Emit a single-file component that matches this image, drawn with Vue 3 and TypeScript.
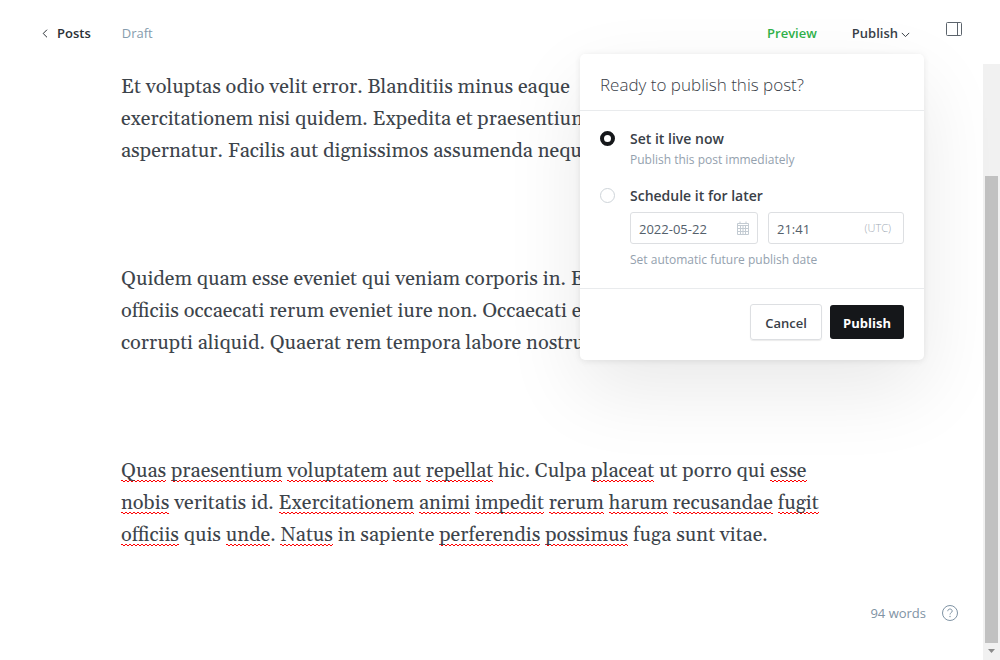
<script setup lang="ts">
import { ref } from 'vue'

interface Piece {
  text: string
  flagged?: boolean
}

const timing = ref<'now' | 'later'>('now')
const publishDate = ref('2022-05-22')
const publishTime = ref('21:41')

// Words wrapped in underscores carry the spell checker's mark.
const source: string[][] = [
  [
    'Et voluptas odio velit error. Blanditiis minus eaque',
    'exercitationem nisi quidem. Expedita et praesentium',
    'aspernatur. Facilis aut dignissimos assumenda neque',
  ],
  [
    'Quidem quam esse eveniet qui veniam corporis in. Et',
    'officiis occaecati rerum eveniet iure non. Occaecati et',
    'corrupti aliquid. Quaerat rem tempora labore nostrum',
  ],
  [
    '_Quas_ _praesentium_ _voluptatem_ _aut_ _repellat_ hic. Culpa _placeat_ ut porro qui _esse_',
    '_nobis_ veritatis id. _Exercitationem_ _animi_ _impedit_ _rerum_ _harum_ _recusandae_ _fugit_',
    '_officiis_ quis _unde_. _Natus_ in sapiente _perferendis_ _possimus_ fuga sunt vitae.',
  ],
]

function split(line: string): Piece[] {
  return line
    .split('_')
    .map((text, i) => ({ text, flagged: i % 2 === 1 }))
    .filter((piece) => piece.text !== '')
}

const paragraphs: Piece[][][] = source.map((lines) => lines.map(split))
</script>

<template>
  <div class="editor">
    <header class="topbar">
      <nav class="crumbs">
        <a class="back" href="#posts">
          <svg width="6" height="9" viewBox="0 0 6 9" aria-hidden="true">
            <path d="M5 .7 1.2 4.5 5 8.3" />
          </svg>
          Posts
        </a>
        <span class="status">Draft</span>
      </nav>
      <div class="actions">
        <button class="preview" type="button">Preview</button>
        <div class="menu">
          <button class="trigger" type="button" aria-expanded="true">
            Publish
            <svg width="9" height="6" viewBox="0 0 9 6" aria-hidden="true">
              <path d="M.8 .9 4.5 4.6 8.2 .9" />
            </svg>
          </button>

          <form class="popup" @submit.prevent>
            <h2>Ready to publish this post?</h2>
            <div class="options">
              <div class="option">
                <input id="now" v-model="timing" type="radio" name="timing" value="now" />
                <div class="detail">
                  <label for="now">Set it live now</label>
                  <p>Publish this post immediately</p>
                </div>
              </div>
              <div class="option">
                <input id="later" v-model="timing" type="radio" name="timing" value="later" />
                <div class="detail">
                  <label for="later">Schedule it for later</label>
                  <div class="fields">
                    <div class="field date">
                      <input v-model="publishDate" type="text" aria-label="Publish date" />
                      <svg width="12" height="14" viewBox="0 0 12 14" aria-hidden="true">
                        <path d="M.5 2.5h11v11H.5zM.5 4.5h11M.5 7.5h11M.5 10.5h11M3.5 4v9.5M6 4v9.5M8.5 4v9.5M3 .5v2M9 .5v2" />
                      </svg>
                    </div>
                    <div class="field time">
                      <input v-model="publishTime" type="text" aria-label="Publish time" />
                      <span>(UTC)</span>
                    </div>
                  </div>
                  <p>Set automatic future publish date</p>
                </div>
              </div>
            </div>
            <footer class="buttons">
              <button class="cancel" type="button">Cancel</button>
              <button class="publish" type="submit">Publish</button>
            </footer>
          </form>
        </div>
        <button class="sidebar" type="button" aria-label="Settings">
          <svg width="16" height="14" viewBox="0 0 16 14" aria-hidden="true">
            <rect x=".5" y=".5" width="15" height="13" rx="1" />
            <path d="M11.5 .5v13" />
          </svg>
        </button>
      </div>
    </header>

    <div class="workspace">
      <main class="canvas">
        <article>
          <p v-for="(lines, p) in paragraphs" :key="p">
            <span v-for="(line, l) in lines" :key="l" class="line"><span
              v-for="(piece, i) in line" :key="i" :class="{ flagged: piece.flagged }">{{ piece.text }}</span></span>
          </p>
        </article>
        <div class="count">
          <span>94 words</span>
          <a href="#help" aria-label="Help">
            <svg width="16" height="16" viewBox="0 0 16 16" aria-hidden="true">
              <circle cx="8" cy="8" r="7.5" />
              <path d="M5.8 6.2C5.8 4.8 6.7 4 8 4s2.2.9 2.2 2.1C10.2 7.7 8 7.7 8 9.5" />
              <circle class="dot" cx="8" cy="11.5" r=".7" />
            </svg>
          </a>
        </div>
      </main>
      <div class="scrollbar" aria-hidden="true">
        <div class="thumb"></div>
        <svg width="7" height="4" viewBox="0 0 7 4"><path d="M0 0h7L3.5 4z" /></svg>
      </div>
    </div>
  </div>
</template>

<style>
body {
  margin: 0;
  overflow: hidden;
}
</style>

<style scoped>
.editor {
  display: flex;
  flex-direction: column;
  height: 100vh;
  background: #fff;
  color: #394047;
  font: 400 13px/20px "Open Sans", "Noto Sans", sans-serif;
}

button,
input {
  font: inherit;
  color: inherit;
}

button {
  padding: 0;
  border: 0;
  background: none;
  cursor: pointer;
}

svg {
  fill: none;
  stroke: currentColor;
}

a {
  color: inherit;
  text-decoration: none;
}

.topbar {
  display: flex;
  justify-content: space-between;
  align-items: center;
  box-sizing: border-box;
  height: 64px;
  padding: 2px 38px 0 42px;
}

.crumbs,
.actions,
.back,
.trigger {
  display: flex;
  align-items: center;
}

.crumbs {
  gap: 31px;
}

.back {
  gap: 9px;
  color: #2b3036;
  font-weight: 600;
}

.status {
  color: #869cad;
}

.preview {
  margin-right: 35px;
  color: #30b24a;
  font-weight: 600;
}

.menu {
  position: relative;
}

.trigger {
  gap: 3px;
  font-weight: 600;
}

.trigger svg {
  margin-top: 4px;
}

.sidebar {
  display: flex;
  margin: 0 0 8px 36px;
  color: #5c646c;
}

.popup {
  position: absolute;
  z-index: 2;
  top: 31px;
  right: -14px;
  width: 344px;
  border-radius: 5px;
  background: #fff;
  box-shadow:
    0 0 7px rgba(0, 0, 0, 0.06),
    0 3px 7px rgba(0, 0, 0, 0.03),
    0 30px 80px rgba(0, 0, 0, 0.09);
}

.popup h2 {
  margin: 0;
  padding: 19px 20px 13px;
  border-bottom: 1px solid #e9ebed;
  font-size: 17px;
  line-height: 24px;
  font-weight: 300;
}

.options {
  display: grid;
  gap: 15px;
  padding: 18px 20px 17px;
}

.option {
  display: flex;
  gap: 15px;
}

.option > input {
  flex: none;
  appearance: none;
  box-sizing: border-box;
  width: 15px;
  height: 15px;
  margin: 2px 0 0;
  border: 1px solid #ced4d9;
  border-radius: 50%;
  background: #fff;
}

.option > input:checked {
  border: 4px solid #15171a;
}

.detail {
  flex: 1;
  min-width: 0;
}

.detail label {
  display: block;
  font-size: 14px;
  font-weight: 600;
}

.detail p {
  margin: 0;
  color: #94a1ae;
  font-size: 12px;
  line-height: 22px;
}

.fields {
  display: flex;
  gap: 10px;
  margin: 6px 0 5px;
}

.field {
  display: flex;
  align-items: center;
  box-sizing: border-box;
  min-width: 0;
  height: 32px;
  padding: 0 8px;
  border: 1px solid #dddfe2;
  border-radius: 3px;
}

.date {
  width: 128px;
}

.time {
  flex: 1;
  padding-right: 12px;
}

.field input {
  flex: 1;
  width: 0;
  min-width: 0;
  padding: 2px 0 0;
  border: 0;
  outline: 0;
  background: none;
  color: #54606b;
}

.field svg {
  color: #c3cbd2;
}

.field span {
  color: #9faab5;
  font-size: 11px;
  font-weight: 300;
}

.buttons {
  display: flex;
  justify-content: flex-end;
  align-items: center;
  gap: 8px;
  padding: 15px 20px 20px;
  border-top: 1px solid #e9ebed;
}

.buttons button {
  box-sizing: border-box;
  padding-top: 2px;
  border-radius: 3px;
  font-weight: 600;
}

.cancel {
  width: 72px;
  height: 36px;
  border: 1px solid #dddfe2;
  box-shadow: 0 1px 1px rgba(0, 0, 0, 0.08);
}

.buttons .publish {
  width: 74px;
  height: 34px;
  background: #15171a;
  color: #fff;
  font-weight: 700;
}

.workspace {
  display: flex;
  flex: 1;
  min-height: 0;
}

.canvas {
  position: relative;
  flex: 1;
  min-width: 0;
  overflow: hidden;
}

article {
  padding: 7px 121px 0;
  color: #3d444b;
  font-family: Georgia, Gelasio, "Liberation Serif", serif;
  font-size: 20px;
  line-height: 32px;
}

article p {
  margin: 0 0 96px;
}

.line {
  display: block;
  white-space: nowrap;
}

.flagged {
  --rise: calc(100% - 2px);
  background:
    linear-gradient(45deg, transparent 34%, #f00 34% 66%, transparent 66%) 0 var(--rise) / 4px 2px repeat-x,
    linear-gradient(135deg, transparent 34%, #f00 34% 66%, transparent 66%) 2px var(--rise) / 4px 2px repeat-x;
}

.count {
  position: absolute;
  right: 25px;
  bottom: 37px;
  display: flex;
  align-items: center;
  gap: 16px;
  color: #7f93a4;
}

.count a {
  display: flex;
}

.count .dot {
  fill: currentColor;
  stroke: none;
}

.scrollbar {
  display: flex;
  flex-direction: column;
  align-items: center;
  justify-content: flex-end;
  gap: 6px;
  box-sizing: border-box;
  width: 17px;
  padding-bottom: 7px;
  background: #f1f1f1;
}

.thumb {
  width: 13px;
  height: 79.3%;
  background: #c1c1c1;
}

.scrollbar path {
  fill: #8b8b8b;
  stroke: none;
}
</style>
